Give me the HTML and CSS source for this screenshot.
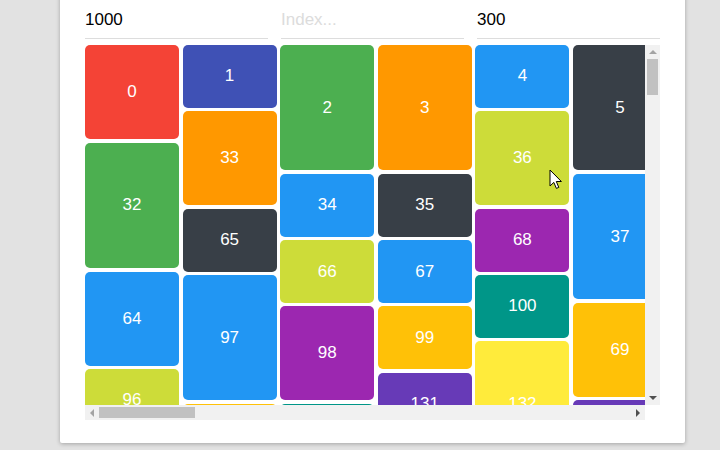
FILE: index.html
```html
<!DOCTYPE html>
<html>
<head>
<meta charset="utf-8">
<link rel="stylesheet" href="styles.css">
</head>
<body>
<div class="page">
  <div class="card">
    <div class="controls">
      <input class="field" type="text" value="1000">
      <input class="field" type="text" placeholder="Index...">
      <input class="field" type="text" value="300">
    </div>
    <div class="scroller">
      <div class="viewport">
        <div class="masonry">
          <div class="col">
            <div class="cell h3 red">0</div>
            <div class="cell h4 green">32</div>
            <div class="cell h3 blue">64</div>
            <div class="cell h2 lime">96</div>
          </div>
          <div class="col">
            <div class="cell h2 indigo">1</div>
            <div class="cell h3 orange">33</div>
            <div class="cell h2 dark">65</div>
            <div class="cell h4 blue">97</div>
            <div class="cell h3 amber">129</div>
          </div>
          <div class="col">
            <div class="cell h4 green">2</div>
            <div class="cell h2 blue">34</div>
            <div class="cell h2 lime">66</div>
            <div class="cell h3 purple">98</div>
            <div class="cell h3 teal">130</div>
          </div>
          <div class="col">
            <div class="cell h4 orange">3</div>
            <div class="cell h2 dark">35</div>
            <div class="cell h2 blue">67</div>
            <div class="cell h2 amber">99</div>
            <div class="cell h2 deep">131</div>
          </div>
          <div class="col">
            <div class="cell h2 blue">4</div>
            <div class="cell h3 lime">36</div>
            <div class="cell h2 purple">68</div>
            <div class="cell h2 teal">100</div>
            <div class="cell h4 yellow">132</div>
          </div>
          <div class="col">
            <div class="cell h4 dark">5</div>
            <div class="cell h4 blue">37</div>
            <div class="cell h3 amber">69</div>
            <div class="cell h3 deep">101</div>
          </div>
        </div>
      </div>
      <div class="vbar">
        <div class="vbtn"><span class="tri up off"></span></div>
        <div class="vthumb"></div>
        <div class="fill"></div>
        <div class="vbtn"><span class="tri down"></span></div>
      </div>
      <div class="hbar">
        <div class="hbtn"><span class="tri left off"></span></div>
        <div class="hthumb"></div>
        <div class="fill"></div>
        <div class="hbtn"><span class="tri right"></span></div>
      </div>
      <div class="corner"></div>
    </div>
  </div>
</div>
<svg class="cursor" width="14" height="22" viewBox="0 0 14 22">
  <path d="M1 1 L1 17 L4.8 13.4 L7.4 19.4 L9.8 18.4 L7.3 12.5 L12.4 12.5 Z" fill="#fff" stroke="#000" stroke-width="1" stroke-linejoin="miter"/>
</svg>
</body>
</html>
```

FILE: styles.css
```css
html, body {
  margin: 0;
  padding: 0;
}
body {
  background: #e2e2e2;
  font-family: "Liberation Sans", Arial, sans-serif;
  overflow: hidden;
  width: 720px;
  height: 450px;
}
.page {
  padding-left: 60px;
}
.card {
  width: 625px;
  box-sizing: border-box;
  background: #fff;
  margin-top: -10px;
  padding: 20px 25px 23px;
  border-radius: 2px;
  box-shadow: 0 1px 4px rgba(0, 0, 0, 0.28);
}
.controls {
  display: flex;
  gap: 13px;
}
.field {
  width: 183px;
  height: 29px;
  box-sizing: border-box;
  margin: 0;
  padding: 0 0 8px;
  border: none;
  border-bottom: 1px solid #dddddd;
  outline: none;
  font-family: "Liberation Sans", Arial, sans-serif;
  font-size: 17px;
  line-height: 20px;
  color: #000;
  background: transparent;
}
.field::placeholder {
  color: #dcdcdc;
}
.scroller {
  margin-top: 6px;
  display: grid;
  grid-template-columns: 560px 15px;
  grid-template-rows: 360px 15px;
}
.viewport {
  overflow: hidden;
}
.masonry {
  display: flex;
  gap: 3.6px;
  width: 3120px;
}
.col {
  flex: none;
  width: 94px;
  display: flex;
  flex-direction: column;
  gap: 3.6px;
}
.cell {
  flex: none;
  border-radius: 5px;
  display: flex;
  align-items: center;
  justify-content: center;
  color: #fff;
  font-size: 17px;
}
.h2 { height: 62.67px; }
.h3 { height: 94px; }
.h4 { height: 125.33px; }
.red { background: #f44336; }
.indigo { background: #3f51b5; }
.green { background: #4caf50; }
.orange { background: #ff9800; }
.blue { background: #2196f3; }
.dark { background: #383f47; }
.lime { background: #cddc39; }
.purple { background: #9c27b0; }
.teal { background: #009688; }
.amber { background: #ffc107; }
.deep { background: #673ab7; }
.yellow { background: #ffeb3b; }

.vbar {
  background: #f1f1f1;
  display: flex;
  flex-direction: column;
}
.hbar {
  background: #f1f1f1;
  display: flex;
}
.corner {
  background: #fff;
}
.fill {
  flex: 1;
}
.vbtn {
  height: 14px;
  flex: none;
  display: flex;
  align-items: center;
  justify-content: center;
}
.hbtn {
  width: 14px;
  flex: none;
  display: flex;
  align-items: center;
  justify-content: center;
}
.vthumb {
  flex: none;
  height: 36px;
  margin: 0 2px;
  background: #c1c1c1;
}
.hthumb {
  flex: none;
  width: 96px;
  margin: 2px 0;
  background: #c1c1c1;
}
.tri {
  width: 0;
  height: 0;
  display: block;
}
.tri.up {
  border-left: 4px solid transparent;
  border-right: 4px solid transparent;
  border-bottom: 4px solid #505050;
}
.tri.down {
  border-left: 4px solid transparent;
  border-right: 4px solid transparent;
  border-top: 4px solid #505050;
}
.tri.left {
  border-top: 4px solid transparent;
  border-bottom: 4px solid transparent;
  border-right: 4px solid #505050;
}
.tri.right {
  border-top: 4px solid transparent;
  border-bottom: 4px solid transparent;
  border-left: 4px solid #505050;
}
.tri.up.off { border-bottom-color: #a3a3a3; }
.tri.left.off { border-right-color: #a3a3a3; }
.cursor {
  position: absolute;
  left: 549px;
  top: 169px;
}
```
